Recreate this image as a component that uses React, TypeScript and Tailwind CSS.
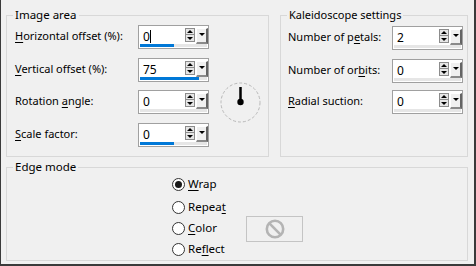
import React from 'react';

const FONT = { fontFamily: '"Noto Sans", "Open Sans", Arial, sans-serif' };

function U({ children }: { children: React.ReactNode }) {
  return <span className="underline underline-offset-2 decoration-1">{children}</span>;
}

function SpinBox({ value, bar, caret }: { value: string; bar?: number; caret?: boolean }) {
  return (
    <div className="w-[71px] h-[24px] border border-[#a0a0a0] bg-white flex flex-col">
      <div className="flex h-[19px]">
        <div className="flex-1 flex items-center pl-[4px] pt-[3px] text-[12px] text-black leading-none">
          <span>{value}</span>
          {caret && <span className="w-px h-[13px] bg-black" />}
        </div>
        <div className="flex flex-col mt-[2px] w-[10px]">
          <div className="h-[7px] border border-[#8c8c8c] bg-[#e6e6e6] flex items-center justify-center">
            <div className="w-0 h-0 border-l-[3px] border-r-[3px] border-b-[3px] border-l-transparent border-r-transparent border-b-black" />
          </div>
          <div className="h-[7px] border border-t-0 border-[#8c8c8c] bg-[#e6e6e6] flex items-center justify-center">
            <div className="w-0 h-0 border-l-[3px] border-r-[3px] border-t-[3px] border-l-transparent border-r-transparent border-t-black" />
          </div>
        </div>
        <div className="ml-[1px] mt-[2px] w-[12px] h-[16px] bg-[#f0f0f0] border-l border-t border-r-2 border-b-2 border-l-white border-t-white border-r-[#646464] border-b-[#8a8a8a] flex items-start justify-center pt-[4px]">
          <div className="w-0 h-0 border-l-[3px] border-r-[3px] border-t-[3px] border-l-transparent border-r-transparent border-t-black" />
        </div>
      </div>
      <div className="h-[3px] mx-[1px] mt-auto mb-[1px] bg-[#e6e6e6]">
        {bar !== undefined && <div className="h-full bg-[#0078d7]" style={{ width: `${bar}%` }} />}
      </div>
    </div>
  );
}

function Row({ label, children, className = '', labelW }: { label: React.ReactNode; children: React.ReactNode; className?: string; labelW: string }) {
  return (
    <div className={`flex items-center ${className}`}>
      <div className={`${labelW} text-[11px] text-black leading-[16px] -mt-[3px]`}>{label}</div>
      {children}
    </div>
  );
}

function Radio({ checked, label, className = '' }: { checked?: boolean; label: React.ReactNode; className?: string }) {
  return (
    <div className={`flex items-center h-[18px] ${className}`}>
      <div className="w-[13px] h-[13px] rounded-full border border-[#333333] bg-white flex items-center justify-center">
        {checked && <div className="w-[7px] h-[7px] rounded-full bg-[#1a1a1a]" />}
      </div>
      <span className="ml-[3px] text-[11.5px] text-black leading-[16px]">{label}</span>
    </div>
  );
}

function Dial() {
  return (
    <svg width="41" height="41" viewBox="0 0 41 41">
      <circle cx="20.5" cy="20.5" r="19.5" fill="none" stroke="#b8b8b8" strokeWidth="1" strokeDasharray="3 2" />
      <line x1="20.5" y1="5" x2="20.5" y2="20" stroke="#000" strokeWidth="2.5" />
      <circle cx="20.5" cy="20" r="3.2" fill="#000" />
    </svg>
  );
}

export default function App() {
  return (
    <div
      className="w-[476px] h-[266px] bg-[#f0f0f0] border-l border-r-2 border-b-2 border-[#3a3a3a] pl-[5px] pt-[7px] overflow-hidden"
      style={FONT}
    >
      <div className="flex">
        <fieldset className="w-[263px] h-[150px] border border-[#d8d8d8] m-0 p-0">
          <legend className="ml-[6px] px-[2px] text-[11.5px] leading-[16px] text-black">Image area</legend>
          <div className="flex pl-[8px]">
            <div className="flex flex-col">
              <Row label={<><U>H</U>orizontal offset (%):</>} labelW="w-[123px]" className="mt-[2px]">
                <SpinBox value="0" bar={50} caret />
              </Row>
              <Row label={<><U>V</U>ertical offset (%):</>} labelW="w-[123px]" className="mt-[9px]">
                <SpinBox value="75" bar={88} />
              </Row>
              <Row label={<>Rotation <U>a</U>ngle:</>} labelW="w-[123px]" className="mt-[8px]">
                <SpinBox value="0" />
              </Row>
              <Row label={<><U>S</U>cale factor:</>} labelW="w-[123px]" className="mt-[9px]">
                <SpinBox value="0" bar={50} />
              </Row>
            </div>
            <div className="ml-[11px] mt-[59px]">
              <Dial />
            </div>
          </div>
        </fieldset>
        <fieldset className="ml-[11px] w-[188px] h-[150px] border border-[#d8d8d8] m-0 p-0">
          <legend className="ml-[6px] px-[2px] text-[11px] leading-[16px] text-black">Kaleidoscope settings</legend>
          <div className="flex flex-col pl-[7px]">
            <Row label={<>Number of p<U>e</U>tals:</>} labelW="w-[104px]" className="mt-[3px]">
              <SpinBox value="2" />
            </Row>
            <Row label={<>Number of or<U>b</U>its:</>} labelW="w-[104px]" className="mt-[9px]">
              <SpinBox value="0" />
            </Row>
            <Row label={<><U>R</U>adial suction:</>} labelW="w-[104px]" className="mt-[7px]">
              <SpinBox value="0" />
            </Row>
          </div>
        </fieldset>
      </div>
      <fieldset className="mt-[2px] w-[462px] h-[102px] border border-[#d8d8d8] m-0 p-0">
        <legend className="ml-[6px] px-[2px] text-[11.5px] leading-[16px] text-black">Edge mode</legend>
        <div className="flex pl-[165px]">
          <div className="flex flex-col w-[74px]">
            <Radio checked label={<><U>W</U>rap</>} />
            <Radio label={<>Repea<U>t</U></>} className="mt-[5px]" />
            <Radio label={<><U>C</U>olor</>} className="mt-[3px]" />
            <Radio label={<>Re<U>f</U>lect</>} className="mt-[3px]" />
          </div>
          <div className="mt-[41px] w-[57px] h-[26px] border border-[#c4c4c4] flex items-center justify-center">
            <svg width="20" height="20" viewBox="0 0 20 20">
              <circle cx="10" cy="10" r="8.2" fill="none" stroke="#b4b4b4" strokeWidth="2.6" />
              <line x1="4.4" y1="4.4" x2="15.6" y2="15.6" stroke="#b4b4b4" strokeWidth="2.6" />
            </svg>
          </div>
        </div>
      </fieldset>
    </div>
  );
}
